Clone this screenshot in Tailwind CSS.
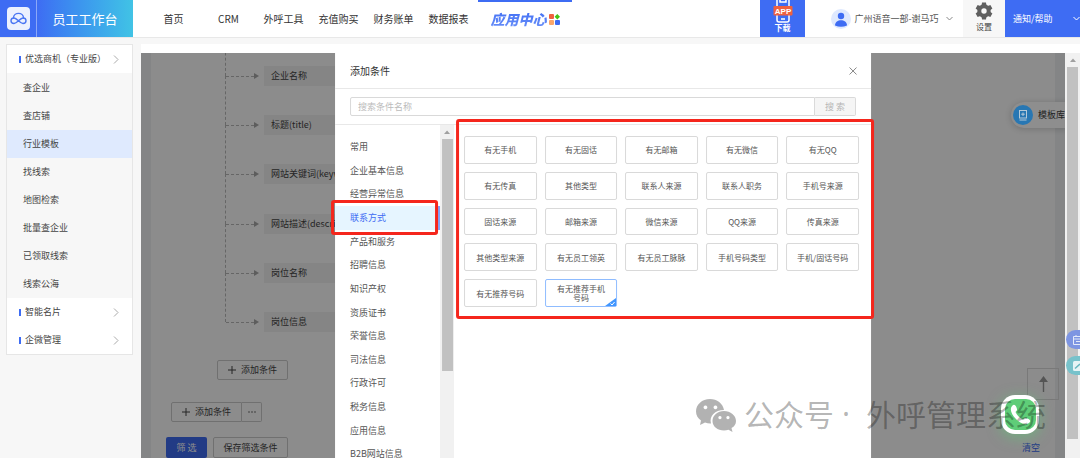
<!DOCTYPE html>
<html lang="zh-CN">
<head>
    <meta charset="UTF-8">
    <meta name="viewport" content="width=device-width, initial-scale=1.0">
    <title>员工工作台</title>
    <script src="https://cdn.jsdelivr.net/npm/@tailwindcss/browser@4"></script>
</head>
<body class="h-screen flex flex-col overflow-hidden bg-[#f7f7f7] text-[#555] text-[9px] font-['Noto_Sans_CJK_SC',sans-serif]">

    <!-- 顶部导航 -->
    <header class="flex h-[38px] shrink-0 bg-white border-b border-[#e8e8e8] text-[10px]">
        <a href="#" aria-label="首页" class="flex w-[37px] items-center justify-center bg-[#3e6cf3] border-r border-[#8ba8f8]">
            <svg class="w-[23px] h-[23px]" viewBox="0 0 23 23" fill="none">
                <rect width="23" height="23" rx="4" fill="#ecf1fe"/>
                <g stroke="#4a76f3" stroke-width="1.4" stroke-linecap="round" stroke-linejoin="round">
                    <path d="M7 16.500C3 16.500 3 11 7 11C10 11 13 16.500 16 16.500C20 16.500 20 11 16 11C13 11 10 16.500 7 16.500Z"/>
                    <path d="M6.500 11C6.500 4.800 16.500 4.800 16.500 11"/>
                </g>
            </svg>
        </a>
        <h1 class="flex w-24 items-center justify-center bg-linear-to-r from-[#3e6cf3] to-[#41c3e5] text-white text-[13px]">员工工作台</h1>
        <nav class="flex ml-[13px] text-[#333]">
            <a href="#" class="flex w-[55px] items-center justify-center">首页</a>
            <a href="#" class="flex w-[55px] items-center justify-center">CRM</a>
            <a href="#" class="flex w-[55px] items-center justify-center">外呼工具</a>
            <a href="#" class="flex w-[55px] items-center justify-center">充值购买</a>
            <a href="#" class="flex w-[55px] items-center justify-center">财务账单</a>
            <a href="#" class="flex w-[55px] items-center justify-center">数据报表</a>
            <a href="#" class="flex w-[94px] ml-[2px] items-center justify-center border-t-2 border-[#3e6cf3] text-[14px] font-black italic">
                <span class="bg-linear-to-b from-[#3e6cf3] to-[#6d92fa] bg-clip-text text-transparent pr-[2px]">应用中心</span>
                <svg class="w-[11px] h-[11px] shrink-0" viewBox="0 0 11 11">
                    <rect width="5" height="5" rx="1" fill="#f0603f"/>
                    <path d="M8.300 0L11 2.700L8.300 5.400L5.600 2.700Z" fill="#45c314"/>
                    <rect y="6" width="5" height="5" rx="1" fill="#fba76b"/>
                    <rect x="6" y="6" width="5" height="5" rx="1" fill="#3e6cf3"/>
                </svg>
            </a>
        </nav>
        <div class="flex ml-auto">
            <a href="#" class="flex flex-col w-[45px] items-center bg-[#3e6cf3] text-white text-[8px] leading-[10px] font-bold">
                <svg class="w-5 h-[23px]" viewBox="0 0 20 23">
                    <rect x="4" y="-2" width="12" height="24" rx="2" fill="none" stroke="#fff" stroke-width="1.500"/>
                    <path d="M7 0V2H13V0M8 19H12" fill="none" stroke="#fff" stroke-width="1.500"/>
                    <rect x="0.500" y="6" width="19" height="9.500" rx="1" fill="#f0603f"/>
                    <text x="10" y="13.500" text-anchor="middle" font-family="Liberation Sans" font-weight="bold" font-size="8" fill="#fff">APP</text>
                </svg>
                下载
            </a>
            <button class="flex w-[158px] pl-4 items-center justify-center gap-[3px] text-[9px] text-[#555]">
                <svg class="w-5 h-5" viewBox="0 0 20 20">
                    <circle cx="10" cy="10" r="10" fill="#dfe9fe"/>
                    <circle cx="10" cy="7" r="3.200" fill="#3e6cf3"/>
                    <path d="M4 16.500C4 9.500 16 9.500 16 16.500Q10 19 4 16.500Z" fill="#3e6cf3"/>
                </svg>
                广州语音一部-谢马巧
                <svg class="w-[7px] h-[7px] ml-1" viewBox="0 0 7 7" fill="none" stroke="#888"><path d="M0.500 2L3.500 5L6.500 2"/></svg>
            </button>
            <button class="flex flex-col w-[42px] items-center pt-[2px] gap-[2px] bg-[#f7f7f7] text-[8px] leading-[10px] text-[#444]">
                <svg class="w-[18px] h-[18px]" viewBox="0 0 18 18">
                    <g fill="#5f5f5f">
                        <path d="M7 0.500H11L11.500 4H6.500Z"/>
                        <path d="M7 0.500H11L11.500 4H6.500Z" transform="rotate(60 9 9)"/>
                        <path d="M7 0.500H11L11.500 4H6.500Z" transform="rotate(120 9 9)"/>
                        <path d="M7 0.500H11L11.500 4H6.500Z" transform="rotate(180 9 9)"/>
                        <path d="M7 0.500H11L11.500 4H6.500Z" transform="rotate(240 9 9)"/>
                        <path d="M7 0.500H11L11.500 4H6.500Z" transform="rotate(300 9 9)"/>
                    </g>
                    <circle cx="9" cy="9" r="4.700" fill="none" stroke="#5f5f5f" stroke-width="4"/>
                </svg>
                设置
            </button>
            <button class="flex w-[75px] items-center justify-between pl-2 bg-[#3e6cf3] text-white text-[9px] overflow-hidden">
                通知/帮助
                <svg class="w-[7px] h-[7px]" viewBox="0 0 7 7" fill="none" stroke="#fff"><path d="M0.500 2L3.500 5L6.500 2"/></svg>
            </button>
        </div>
    </header>

    <div class="flex flex-1 min-h-0 pt-[6px] pl-[6px] gap-2">

        <!-- 左侧菜单 -->
        <aside class="w-[127px] shrink-0 self-start border border-[#e6e6e6] bg-white text-[#444]">
            <a href="#" class="flex h-7 items-center pl-3 pr-[13px]">
                <span class="w-[2px] h-[7px] mr-1 bg-[#3e6cf3]"></span>优选商机（专业版）
                <svg class="w-[6px] h-[9px] ml-auto" viewBox="0 0 6 9" fill="none" stroke="#aaa"><path d="M1 0.500L5 4.500L1 8.500"/></svg>
            </a>
            <nav class="bg-[#f7f7f7] pt-px">
                <a href="#" class="flex h-7 items-center pl-4">查企业</a>
                <a href="#" class="flex h-7 items-center pl-4">查店铺</a>
                <a href="#" class="flex h-7 items-center pl-4 bg-[#dfeafe]">行业模板</a>
                <a href="#" class="flex h-7 items-center pl-4">找线索</a>
                <a href="#" class="flex h-7 items-center pl-4">地图检索</a>
                <a href="#" class="flex h-7 items-center pl-4">批量查企业</a>
                <a href="#" class="flex h-7 items-center pl-4">已领取线索</a>
                <a href="#" class="flex h-7 items-center pl-4">线索公海</a>
            </nav>
            <a href="#" class="flex h-7 items-center pl-3 pr-[13px]">
                <span class="w-[2px] h-[7px] mr-1 bg-[#3e6cf3]"></span>智能名片
                <svg class="w-[6px] h-[9px] ml-auto" viewBox="0 0 6 9" fill="none" stroke="#aaa"><path d="M1 0.500L5 4.500L1 8.500"/></svg>
            </a>
            <a href="#" class="flex h-7 items-center pl-3 pr-[13px]">
                <span class="w-[2px] h-[7px] mr-1 bg-[#3e6cf3]"></span>企微管理
                <svg class="w-[6px] h-[9px] ml-auto" viewBox="0 0 6 9" fill="none" stroke="#aaa"><path d="M1 0.500L5 4.500L1 8.500"/></svg>
            </a>
        </aside>

        <main class="flex flex-1 min-w-0 pt-[9px] bg-white">
            <div class="relative flex-1 min-w-0 overflow-hidden bg-[#f0f2f5] px-[10px]">

                <!-- 条件树 -->
                <div class="h-full bg-white overflow-hidden text-[#444]">
                    <ul class="ml-[74px] -mt-[26px]">
                        <li class="flex h-[49px] items-end border-l border-dashed border-[#bbb]">
                            <div class="flex items-center translate-y-1/2">
                                <span class="w-7 border-b border-dashed border-[#bbb]"></span>
                                <svg class="w-[5px] h-[6px] mr-[5px]" viewBox="0 0 5 6"><path d="M0 0L5 3L0 6Z" fill="#aaa"/></svg>
                                <span class="w-[71px] overflow-hidden whitespace-nowrap h-5 pl-[7px] leading-[19px] bg-[#f2f2f2]">企业名称</span>
                            </div>
                        </li>
                        <li class="flex h-[49px] items-end border-l border-dashed border-[#bbb]">
                            <div class="flex items-center translate-y-1/2">
                                <span class="w-7 border-b border-dashed border-[#bbb]"></span>
                                <svg class="w-[5px] h-[6px] mr-[5px]" viewBox="0 0 5 6"><path d="M0 0L5 3L0 6Z" fill="#aaa"/></svg>
                                <span class="w-[71px] overflow-hidden whitespace-nowrap h-5 pl-[7px] leading-[19px] bg-[#f2f2f2]">标题(title)</span>
                            </div>
                        </li>
                        <li class="flex h-[49px] items-end border-l border-dashed border-[#bbb]">
                            <div class="flex items-center translate-y-1/2">
                                <span class="w-7 border-b border-dashed border-[#bbb]"></span>
                                <svg class="w-[5px] h-[6px] mr-[5px]" viewBox="0 0 5 6"><path d="M0 0L5 3L0 6Z" fill="#aaa"/></svg>
                                <span class="w-[71px] overflow-hidden whitespace-nowrap h-5 pl-[7px] leading-[19px] bg-[#f2f2f2]">网站关键词(keyw</span>
                            </div>
                        </li>
                        <li class="flex h-[50px] items-end border-l border-dashed border-[#bbb]">
                            <div class="flex items-center translate-y-1/2">
                                <span class="w-7 border-b border-dashed border-[#bbb]"></span>
                                <svg class="w-[5px] h-[6px] mr-[5px]" viewBox="0 0 5 6"><path d="M0 0L5 3L0 6Z" fill="#aaa"/></svg>
                                <span class="w-[71px] overflow-hidden whitespace-nowrap h-5 pl-[7px] leading-[19px] bg-[#f2f2f2]">网站描述(descrip</span>
                            </div>
                        </li>
                        <li class="flex h-[49px] items-end border-l border-dashed border-[#bbb]">
                            <div class="flex items-center translate-y-1/2">
                                <span class="w-7 border-b border-dashed border-[#bbb]"></span>
                                <svg class="w-[5px] h-[6px] mr-[5px]" viewBox="0 0 5 6"><path d="M0 0L5 3L0 6Z" fill="#aaa"/></svg>
                                <span class="w-[71px] overflow-hidden whitespace-nowrap h-5 pl-[7px] leading-[19px] bg-[#f2f2f2]">岗位名称</span>
                            </div>
                        </li>
                        <li class="flex h-[49px] items-end border-l border-dashed border-[#bbb]">
                            <div class="flex items-center translate-y-1/2">
                                <span class="w-7 border-b border-dashed border-[#bbb]"></span>
                                <svg class="w-[5px] h-[6px] mr-[5px]" viewBox="0 0 5 6"><path d="M0 0L5 3L0 6Z" fill="#aaa"/></svg>
                                <span class="w-[71px] overflow-hidden whitespace-nowrap h-5 pl-[7px] leading-[19px] bg-[#f2f2f2]">岗位信息</span>
                            </div>
                        </li>
                    </ul>
                    <button class="flex w-[71px] h-5 mt-[38px] ml-[66px] items-center justify-center gap-[5px] border border-[#ccc] rounded-[2px]">
                        <svg class="w-2 h-2" viewBox="0 0 8 8" stroke="#444"><path d="M4 0V8M0 4H8"/></svg>
                        添加条件
                    </button>
                    <div class="flex h-5 mt-[22px] ml-5">
                        <button class="flex w-[71px] items-center justify-center gap-[5px] border border-[#ccc] rounded-l-[2px]">
                            <svg class="w-2 h-2" viewBox="0 0 8 8" stroke="#444"><path d="M4 0V8M0 4H8"/></svg>
                            添加条件
                        </button>
                        <button aria-label="更多" class="flex w-5 items-center justify-center border border-l-0 border-[#ccc] rounded-r-[2px]">
                            <svg class="w-2 h-1" viewBox="0 0 8 4" fill="#444"><circle cx="1" cy="2" r="0.700"/><circle cx="4" cy="2" r="0.700"/><circle cx="7" cy="2" r="0.700"/></svg>
                        </button>
                    </div>
                    <div class="flex h-[21px] mt-[15px] ml-[15px] gap-[6px]">
                        <button class="w-[41px] bg-[#3e6cf3] text-white rounded-[2px]">筛 选</button>
                        <button class="w-[75px] border border-[#ccc] rounded-[2px]">保存筛选条件</button>
                    </div>
                </div>
                <button aria-label="回到顶部" class="absolute right-[6px] bottom-[58px] flex w-8 h-8 items-center justify-center border border-[#ddd]">
                    <svg class="w-[9px] h-4" viewBox="0 0 9 16"><path d="M4.500 0L9 6H5.200V16H3.800V6H0Z" fill="#999"/></svg>
                </button>
                <a href="#" class="absolute right-[25px] bottom-0 h-5 leading-5 text-[#3e6cf3]">清空</a>

                <!-- 遮罩 -->
                <div class="absolute inset-0 bg-black/45"></div>

                <button class="absolute -right-1 top-[49px] flex h-[26px] w-[58px] items-center gap-[5px] pl-[2px] rounded-l-full bg-[#8e8e8e] text-[#222] shadow-[0_1px_6px_rgba(0,0,0,0.18)] whitespace-nowrap">
                    <svg class="w-5 h-5 shrink-0" viewBox="0 0 20 20" fill="none" stroke="#b4c9d8">
                        <circle cx="10" cy="10" r="10" fill="#2877b3" stroke="none"/>
                        <rect x="6.500" y="5.500" width="7" height="7.500"/>
                        <path d="M10 7.500V11M8.200 9.200H11.800M6.500 15H13.500"/>
                    </svg>
                    模板库
                </button>

                <!-- 添加条件弹窗 -->
                <div role="dialog" aria-labelledby="dialogTitle" class="absolute top-0 bottom-0 left-1/2 -translate-x-1/2 flex flex-col w-[58%] bg-white text-[#555]">
                    <div class="flex h-9 shrink-0 items-center justify-between pl-[15px] pr-[14px] border-b border-[#e8e8e8]">
                        <h2 id="dialogTitle" class="text-[10px] text-[#333]">添加条件</h2>
                        <button aria-label="关闭">
                            <svg class="w-2 h-2" viewBox="0 0 8 8" stroke="#888"><path d="M0.500 0.500L7.500 7.500M7.500 0.500L0.500 7.500"/></svg>
                        </button>
                    </div>
                    <form class="flex h-9 shrink-0 px-[15px] py-2 border-b border-[#e8e8e8]">
                        <input type="text" aria-label="搜索条件名称" placeholder="搜索条件名称" class="flex-1 min-w-0 px-[7px] border border-[#d9d9d9] rounded-l-[2px] placeholder:text-[#bbb]">
                        <button type="button" class="w-[41px] border border-l-0 border-[#d9d9d9] rounded-r-[2px] bg-[#f5f5f5] text-[#b5b5b5]">搜 索</button>
                    </form>
                    <div class="flex flex-1 min-h-0">
                        <nav class="w-[105px] shrink-0 overflow-hidden pt-[10px]">
                            <div class="grid grid-rows-14 h-[331px]">
                                <a href="#" class="flex items-center pl-[15px]">常用</a>
                                <a href="#" class="flex items-center pl-[15px]">企业基本信息</a>
                                <a href="#" class="flex items-center pl-[15px]">经营异常信息</a>
                                <a href="#" class="flex items-center pl-[15px] bg-[#e6f5ff] border-r-2 border-[#7f9ffa] text-[#3e6cf3]">联系方式</a>
                                <a href="#" class="flex items-center pl-[15px]">产品和服务</a>
                                <a href="#" class="flex items-center pl-[15px]">招聘信息</a>
                                <a href="#" class="flex items-center pl-[15px]">知识产权</a>
                                <a href="#" class="flex items-center pl-[15px]">资质证书</a>
                                <a href="#" class="flex items-center pl-[15px]">荣誉信息</a>
                                <a href="#" class="flex items-center pl-[15px]">司法信息</a>
                                <a href="#" class="flex items-center pl-[15px]">行政许可</a>
                                <a href="#" class="flex items-center pl-[15px]">税务信息</a>
                                <a href="#" class="flex items-center pl-[15px]">应用信息</a>
                                <a href="#" class="flex items-center pl-[15px]">B2B网站信息</a>
                            </div>
                        </nav>
                        <div class="flex flex-col w-[14px] shrink-0 items-center bg-[#f1f1f1]">
                            <svg class="w-[14px] h-[14px] shrink-0" viewBox="0 0 14 14"><path d="M4 9H10L7 5.500Z" fill="#a0a0a0"/></svg>
                            <div class="w-[11px] h-[232px] bg-[#c1c1c1]"></div>
                        </div>
                        <div class="flex-1 self-start grid grid-cols-5 grid-rows-5 h-[182px] gap-2 pt-[11px] pl-[10px] pr-3 text-[8px] leading-[9px]">
                            <button class="border border-[#d9d9d9] rounded-[2px]">有无手机</button>
                            <button class="border border-[#d9d9d9] rounded-[2px]">有无固话</button>
                            <button class="border border-[#d9d9d9] rounded-[2px]">有无邮箱</button>
                            <button class="border border-[#d9d9d9] rounded-[2px]">有无微信</button>
                            <button class="border border-[#d9d9d9] rounded-[2px]">有无QQ</button>
                            <button class="border border-[#d9d9d9] rounded-[2px]">有无传真</button>
                            <button class="border border-[#d9d9d9] rounded-[2px]">其他类型</button>
                            <button class="border border-[#d9d9d9] rounded-[2px]">联系人来源</button>
                            <button class="border border-[#d9d9d9] rounded-[2px]">联系人职务</button>
                            <button class="border border-[#d9d9d9] rounded-[2px]">手机号来源</button>
                            <button class="border border-[#d9d9d9] rounded-[2px]">固话来源</button>
                            <button class="border border-[#d9d9d9] rounded-[2px]">邮箱来源</button>
                            <button class="border border-[#d9d9d9] rounded-[2px]">微信来源</button>
                            <button class="border border-[#d9d9d9] rounded-[2px]">QQ来源</button>
                            <button class="border border-[#d9d9d9] rounded-[2px]">传真来源</button>
                            <button class="border border-[#d9d9d9] rounded-[2px]">其他类型来源</button>
                            <button class="border border-[#d9d9d9] rounded-[2px]">有无员工领英</button>
                            <button class="border border-[#d9d9d9] rounded-[2px]">有无员工脉脉</button>
                            <button class="border border-[#d9d9d9] rounded-[2px]">手机号码类型</button>
                            <button class="border border-[#d9d9d9] rounded-[2px]">手机/固话号码</button>
                            <button class="border border-[#d9d9d9] rounded-[2px]">有无推荐号码</button>
                            <button aria-pressed="true" class="relative px-2 border border-[#8fbcff] rounded-[2px]">
                                有无推荐手机号码
                                <svg class="absolute right-0 bottom-0 w-[11px] h-2" viewBox="0 0 11 8"><path d="M11 0V8H0Z" fill="#4096ff"/><path d="M5.500 5.500L7 7L9.500 4" fill="none" stroke="#fff"/></svg>
                            </button>
                        </div>
                    </div>

                    <!-- 红框标注 -->
                    <div class="absolute -left-1 top-[147px] w-[107px] h-[35px] border-3 border-[#f5261c] rounded-[3px]"></div>
                    <div class="absolute left-[121px] -right-[3px] top-[66px] h-[200px] border-3 border-[#f5261c] rounded-[3px]"></div>
                </div>
            </div>

            <!-- 滚动条 -->
            <div class="flex flex-col w-[15px] shrink-0 items-center bg-[#f1f1f1]">
                <svg class="w-[14px] h-[14px] shrink-0" viewBox="0 0 14 14"><path d="M4 9H10L7 5.500Z" fill="#a0a0a0"/></svg>
                <div class="w-[11px] h-[372px] bg-[#c1c1c1]"></div>
            </div>
        </main>
    </div>

    <!-- 右侧悬浮按钮 -->
    <div class="absolute right-0 bottom-[83px] flex flex-col gap-[7px]">
        <button aria-label="日历" class="flex w-[14px] h-[19px] items-center justify-end rounded-l-full bg-[#7d95e2]">
            <svg class="w-[7px] h-[10px]" viewBox="0 0 7 10" fill="none" stroke="#e4eafa"><path d="M7 1.500H0.500V9.500H7M0.500 4H7M3 0V2M3 6.500H7"/></svg>
        </button>
        <button aria-label="编辑" class="flex w-[14px] h-[19px] items-center justify-end rounded-l-full bg-[#77c2cb]">
            <svg class="w-[7px] h-[10px]" viewBox="0 0 7 10"><rect width="9" height="10" rx="1.500" fill="#e6f4f5"/><path d="M2 7.500L7 3" stroke="#66b5be" stroke-width="1.500"/></svg>
        </button>
    </div>

    <button aria-label="电话" class="absolute right-[41px] bottom-6 flex w-[38px] h-[39px] items-center justify-center rounded-[14px] bg-white shadow-[0_3px_14px_rgba(95,203,118,0.6)]">
        <svg class="w-[31px] h-[31px]" viewBox="0 0 31 31">
            <rect width="31" height="31" rx="10" fill="#5fcd78"/>
            <path d="M7.500 6.500C9 5 10.500 6 11.500 8.500C12.500 11 12 11.500 10.500 13C12 16.500 14.500 19 18 20.500C19.500 19 20 18.500 22.500 19.500C25 20.500 26 22 24.500 23.500C21 27 15.500 24.500 11 20C6.500 15.500 4 10 7.500 6.500Z" fill="#fff"/>
        </svg>
    </button>

    <!-- 水印 -->
    <div class="absolute right-[34px] bottom-[25px] flex items-center h-10 text-[30px] text-black/30 whitespace-nowrap pointer-events-none">
        <svg class="w-10 h-[33px] mr-2 mt-1" viewBox="0 0 40 33" fill="currentColor">
            <path fill-rule="evenodd" d="M14 0C6 0 0 5.500 0 12.500C0 16.500 2 19.500 5 21.500L4 26L9 23.500C11 24.200 13 24.500 15 24.400C13 17 19 11 28 11C27 4.500 21 0 14 0ZM9.500 6.500A1.900 1.900 0 1 1 9.400 6.500ZM19.500 6.500A1.900 1.900 0 1 1 19.400 6.500Z"/>
            <path fill-rule="evenodd" d="M28 12C21.500 12 16.500 16.500 16.500 22C16.500 27.500 21.500 31.500 28 31.500C29.500 31.500 31 31.300 32.500 30.800L36.500 33L35.500 29C38.500 27.500 40 25 40 22C40 16.500 34.500 12 28 12ZM24 17A1.600 1.600 0 1 1 23.900 17ZM32 17A1.600 1.600 0 1 1 31.900 17Z"/>
        </svg>
        <span>公众号</span>
        <span class="w-8 pl-2 font-['Noto_Sans',sans-serif]">·</span>
        <span>外呼管理系统</span>
    </div>

</body>
</html>
